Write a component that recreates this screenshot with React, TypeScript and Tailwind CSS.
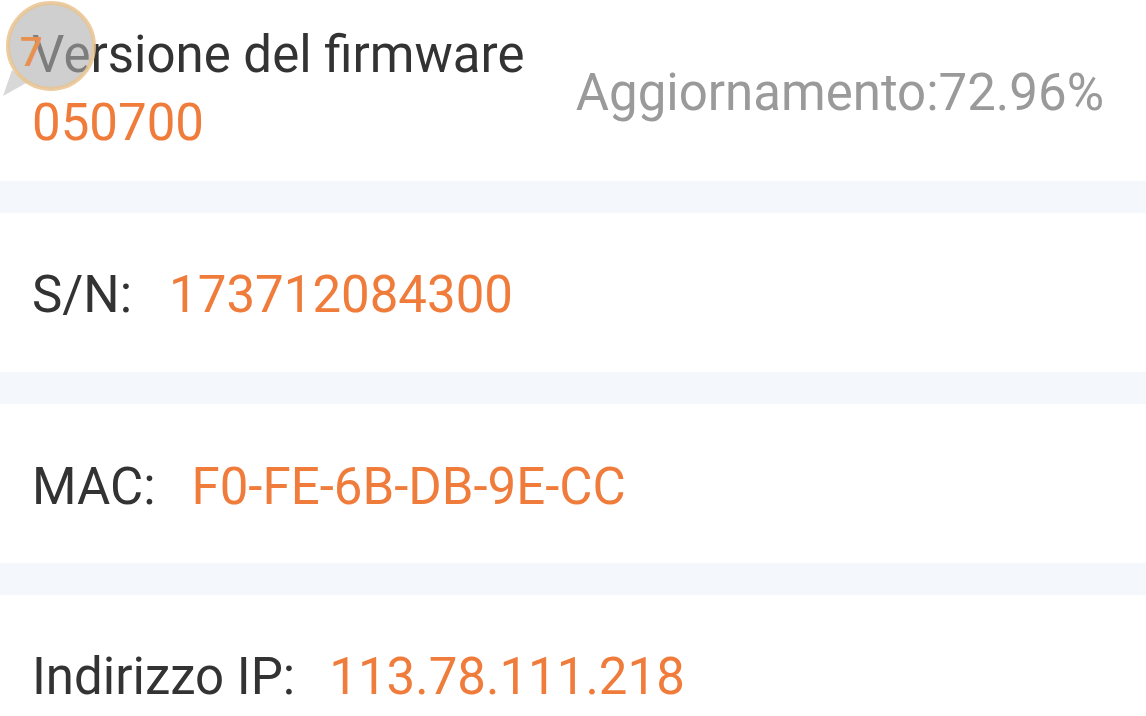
import React from "react";

const font = { fontFamily: "Roboto, 'Noto Sans', sans-serif" };

function Row({ label, value, pad, gap }: { label: string; value: string; pad: string; gap: string }) {
  return (
    <div className={`flex h-[159px] items-center bg-white px-[32px] ${pad}`}>
      <span className="text-[51px] text-[#333333]">{label}</span>
      <span className={`${gap} text-[51px] text-[#f07c3c]`}>{value}</span>
    </div>
  );
}

export default function App() {
  return (
    <div className="relative h-[716px] w-[1146px] overflow-hidden bg-white" style={font}>
      <div className="flex h-[181px] items-start justify-between bg-white pl-[32px] pr-[42px] pt-[20px]">
        <div className="flex flex-col">
          <span className="text-[51px] leading-[70px] text-[#333333]">Versione del firmware</span>
          <span className="text-[51px] leading-[66px] text-[#f07c3c]">050700</span>
        </div>
        <span className="mt-[35px] text-[51px] text-[#9a9a9a]">Aggiornamento:72.96%</span>
      </div>
      <div className="h-[32px] bg-[#f4f7fc]" />
      <Row label="S/N:" value="173712084300" pad="pt-[6px]" gap="ml-[37px]" />
      <div className="h-[32px] bg-[#f4f7fc]" />
      <Row label="MAC:" value="F0-FE-6B-DB-9E-CC" pad="pt-[8px]" gap="ml-[36px]" />
      <div className="h-[32px] bg-[#f4f7fc]" />
      <Row label="Indirizzo IP:" value="113.78.111.218" pad="pt-[6px]" gap="ml-[34px]" />

      <svg className="absolute left-0 top-0" width="104" height="104" viewBox="0 0 104 104">
        <path d="M12 70 L3 96 L28 82 Z" fill="rgba(190,190,190,0.6)" />
        <circle cx="51" cy="46" r="43" fill="rgba(175,175,175,0.6)" stroke="rgba(233,195,145,0.85)" strokeWidth="4" />
        <text x="20" y="66" fontSize="40" fontWeight="500" fill="#e89050" fontFamily="Roboto, sans-serif">7</text>
      </svg>
    </div>
  );
}
